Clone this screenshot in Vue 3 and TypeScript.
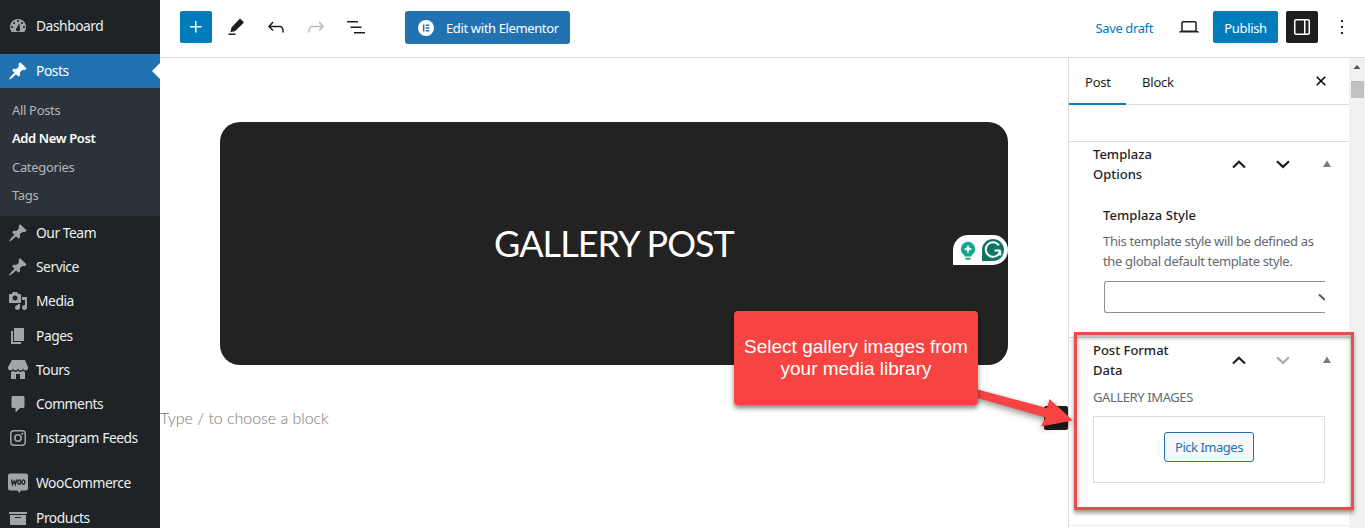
<script setup lang="ts">
interface MenuItem {
  label: string
  icon: string
  cls?: string
}

const pin = 'M10.44 3.02l1.82-1.82 6.36 6.35-1.83 1.82c-1.05-.68-2.48-.57-3.41.36l-.75.75c-.92.93-1.04 2.35-.35 3.41l-1.83 1.82-2.41-2.41-2.8 2.79c-.42.42-3.38 2.71-3.8 2.29s1.86-3.39 2.28-3.81l2.79-2.79L4.1 9.36l1.83-1.82c1.05.69 2.48.57 3.4-.36l.75-.75c.93-.92 1.05-2.35.36-3.41z'
const dashboard = 'M3.76 16h12.48c1.1-1.37 1.76-3.11 1.76-5 0-4.42-3.58-8-8-8s-8 3.58-8 8c0 1.89.66 3.63 1.76 5zM10 4c.55 0 1 .45 1 1s-.45 1-1 1-1-.45-1-1 .45-1 1-1zM6 6c.55 0 1 .45 1 1s-.45 1-1 1-1-.45-1-1 .45-1 1-1zm8 0c.55 0 1 .45 1 1s-.45 1-1 1-1-.45-1-1 .45-1 1-1zM11.300 7l.7 6.200a2 2 0 1 1-2.900-1.600zM4 10c.55 0 1 .45 1 1s-.45 1-1 1-1-.45-1-1 .45-1 1-1zm12 0c.55 0 1 .45 1 1s-.45 1-1 1-1-.45-1-1 .45-1 1-1z'
const media = 'M13 11V4c0-.55-.45-1-1-1h-1.67L9 1H5L3.67 3H2c-.55 0-1 .45-1 1v7c0 .55.45 1 1 1h10c.55 0 1-.45 1-1zM7 4.5c1.38 0 2.5 1.12 2.5 2.5S8.38 9.5 7 9.5 4.5 8.38 4.5 7 5.62 4.5 7 4.5zM14 6h5v10.5c0 1.38-1.12 2.5-2.5 2.5S14 17.88 14 16.5s1.12-2.5 2.5-2.5c.17 0 .34.02.5.05V9h-3V6zm-4 8.05V13h2v3.5c0 1.38-1.12 2.5-2.5 2.5S7 17.88 7 16.5 8.12 14 9.5 14c.17 0 .34.02.5.05z'
const pages = 'M6 15V2h10v13H6zm-1 1h8v2H3V5h2v11z'
const store = 'M1 10c.41.29.96.43 1.5.43.55 0 1.09-.14 1.5-.43.62-.46 1-1.17 1-2 0 .83.37 1.54 1 2 .41.29.96.43 1.5.43.55 0 1.09-.14 1.5-.43.62-.46 1-1.17 1-2 0 .83.37 1.54 1 2 .41.29.96.43 1.51.43.54 0 1.08-.14 1.49-.43.62-.46 1-1.17 1-2 0 .83.37 1.54 1 2 .41.29.96.43 1.5.43.55 0 1.09-.14 1.5-.43.63-.46 1-1.17 1-2V7l-3-7H4L0 7v1c0 .83.37 1.54 1 2zm2 8.99h5v-5h4v5h5v-7c-.37-.05-.72-.22-1-.43-.63-.45-1-.73-1-1.56 0 .83-.38 1.11-1 1.56-.41.3-.95.43-1.49.44-.55 0-1.1-.14-1.51-.44-.63-.45-1-.73-1-1.56 0 .83-.38 1.11-1 1.56-.41.3-.95.43-1.5.44-.54 0-1.09-.14-1.5-.44-.63-.45-1-.73-1-1.57 0 .84-.38 1.12-1 1.57-.29.21-.63.38-1 .44v6.99z'
const comment = 'M5 2h10c1.1 0 1.5.6 1.500 1.500v9c0 .9-.5 1.500-1.500 1.500h-3l-4.500 4.500v-4.500H5c-1 0-1.500-.6-1.500-1.500v-9C3.500 2.600 4 2 5 2z'
const instagram = 'M6 2h8a4 4 0 0 1 4 4v8a4 4 0 0 1-4 4H6a4 4 0 0 1-4-4V6a4 4 0 0 1 4-4zm0 1.500A2.500 2.500 0 0 0 3.500 6v8A2.500 2.500 0 0 0 6 16.500h8a2.500 2.500 0 0 0 2.500-2.500V6A2.500 2.500 0 0 0 14 3.500zM10 6a4 4 0 1 1 0 8 4 4 0 0 1 0-8zm0 1.600a2.400 2.400 0 1 0 0 4.800 2.400 2.400 0 0 0 0-4.800zM14.300 4.700a1 1 0 1 1 0 2 1 1 0 0 1 0-2z'
const woo = 'M2 .5h16a2 2 0 0 1 2 2v13a2 2 0 0 1-2 2h-5.500l-.7 2.500-2.600-2.500H2a2 2 0 0 1-2-2v-13a2 2 0 0 1 2-2z'
const archive = 'M19 4v2H1V4h18zM2 7h16v10H2V7zm11 3V9H7v1h6z'

const subItems: string[] = ['All Posts', 'Add New Post', 'Categories', 'Tags']

const items: MenuItem[] = [
  { label: 'Our Team', icon: pin },
  { label: 'Service', icon: pin },
  { label: 'Media', icon: media },
  { label: 'Pages', icon: pages },
  { label: 'Tours', icon: store },
  { label: 'Comments', icon: comment },
  { label: 'Instagram Feeds', icon: instagram },
  { label: 'WooCommerce', icon: woo, cls: 'woo' },
  { label: 'Products', icon: archive },
]
</script>

<template>
  <div class="screen">
    <nav class="menu">
      <div class="item first">
        <svg class="dash" viewBox="0 0 20 20"><path :d="dashboard" fill-rule="evenodd" /></svg>
        <span>Dashboard</span>
      </div>
      <div class="item current">
        <svg class="dash" viewBox="0 0 20 20"><path :d="pin" /></svg>
        <span>Posts</span>
        <i class="notch"></i>
      </div>
      <div class="submenu">
        <div v-for="s in subItems" :key="s" class="sub" :class="{ on: s === 'Add New Post' }">{{ s }}</div>
      </div>
      <div v-for="m in items" :key="m.label" class="item" :class="m.cls">
        <svg class="dash" viewBox="0 0 20 20">
          <path :d="m.icon" fill-rule="evenodd" />
          <g v-if="m.cls === 'woo'" class="woo-mark">
            <path d="M3.500 6.500l1 5 1.600-3.600 1.300 3.600 1.300-5" />
            <ellipse cx="11.200" cy="9" rx="1.400" ry="2.200" />
            <ellipse cx="15.400" cy="9" rx="1.400" ry="2.200" />
          </g>
        </svg>
        <span>{{ m.label }}</span>
      </div>
    </nav>

    <div class="editor">
      <header class="bar">
        <div class="tools">
          <button class="sq blue"><svg viewBox="0 0 24 24"><path d="M11 12.500V17.500H12.500V12.500H17.500V11H12.500V6H11V11H6V12.500H11Z" /></svg></button>
          <button class="sq"><svg viewBox="0 0 24 24"><path d="M16.800 4.200l2.400 2.300c.6.600.6 1.200 0 1.800L11.200 16l-4.800 1.300 1.100-4.900 7.700-8.200c.6-.6 1.100-.6 1.600 0zM4.500 18.500h7V20h-7z" /></svg></button>
          <button class="sq"><svg viewBox="0 0 24 24"><path d="M18.300 11.700c-.6-.6-1.400-.9-2.300-.9H6.700l2.900-3.300-1.100-1-4.500 5L8.500 16l1-1-2.700-2.700H16c.5 0 .9.2 1.300.5 1 1 1 3.400 1 4.500v.3h1.500v-.2c0-1.500 0-4.300-1.500-5.700z" /></svg></button>
          <button class="sq off"><svg viewBox="0 0 24 24"><path d="M15.600 6.500l-1.100 1 2.900 3.300H8c-.9 0-1.700.3-2.300.9-1.400 1.500-1.400 4.200-1.400 5.600v.2h1.500v-.3c0-1.100 0-3.500 1-4.500.3-.3.700-.5 1.300-.5h9.200L14.500 15l1.100 1.100 4.600-4.600-4.600-5z" /></svg></button>
          <button class="sq"><svg viewBox="0 0 24 24"><path d="M3 6h11v1.500H3V6Zm3.500 5.500h11V13h-11v-1.500ZM21 17H10v1.500h11V17Z" /></svg></button>
        </div>
        <button class="elementor">
          <svg viewBox="0 0 16 16"><circle cx="8" cy="8" r="8" fill="#fff" /><path d="M4.900 4.500h1.500v7H4.900zM7.700 4.500h3.700v1.400H7.700zM7.700 7.300h3.700v1.400H7.700zM7.700 10.100h3.700v1.400H7.700z" fill="#2271b1" /></svg>
          <span>Edit with Elementor</span>
        </button>
        <div class="actions">
          <span class="draft">Save draft</span>
          <button class="sq device"><svg viewBox="0 0 24 24"><path d="M20.500 16h-.7V8c0-1.100-.9-2-2-2H6.200c-1.100 0-2 .9-2 2v8h-.7c-.8 0-1.500.7-1.500 1.500h20c0-.8-.7-1.500-1.500-1.500zM5.700 8c0-.3.2-.5.5-.5h11.600c.3 0 .5.2.5.5v7.600H5.700V8z" /></svg></button>
          <button class="publish">Publish</button>
          <button class="sq dark"><svg viewBox="0 0 24 24"><path d="M18 4H6c-1.100 0-2 .9-2 2v12c0 1.100.9 2 2 2h12c1.100 0 2-.9 2-2V6c0-1.100-.9-2-2-2zm-4 14.500H6c-.3 0-.5-.2-.5-.5V6c0-.3.2-.5.5-.5h8v13zm4.500-.5c0 .3-.2.5-.5.5h-2.500v-13H18c.3 0 .5.2.5.5v12z" /></svg></button>
          <button class="sq"><svg viewBox="0 0 24 24"><path d="M13 19h-2v-2h2v2zm0-6h-2v-2h2v2zm0-6h-2V5h2v2z" /></svg></button>
        </div>
      </header>

      <div class="body">
        <main class="canvas">
          <section class="cover">
            <h1>GALLERY POST</h1>
            <div class="grammar">
              <svg viewBox="0 0 55 30">
                <path d="M15 0h25a15 15 0 0 1 0 30H0V15A15 15 0 0 1 15 0z" fill="#fff" />
                <circle cx="15" cy="14" r="7.200" fill="#12a58c" />
                <path d="M11.500 19h7v2.500h-7zM12.500 22.700h5v2h-5z" fill="#12a58c" />
                <path d="M15 9.500l1.300 3.200 3.200 1.300-3.200 1.300L15 18.500l-1.300-3.200-3.200-1.300 3.200-1.300z" fill="#fff" />
                <path d="M40 4a11 11 0 1 1 0 22H29V15A11 11 0 0 1 40 4z" fill="#0d7562" />
                <path d="M45.800 10.300A7.200 7.200 0 1 0 47 16.200M47.300 15.500h-5.800M47.200 15.500v5" fill="none" stroke="#fff" stroke-width="2" />
              </svg>
            </div>
          </section>
          <div class="prompt"><span>Type / to choose a block</span><i class="inserter"></i></div>
        </main>

        <aside class="panel">
          <div class="tabs">
            <span class="tab active">Post</span>
            <span class="tab">Block</span>
            <svg class="close" viewBox="0 0 24 24"><path d="M12 13.060l3.712 3.713 1.061-1.060L13.061 12l3.712-3.712-1.060-1.060L12 10.938 8.288 7.227l-1.061 1.060L10.939 12l-3.712 3.712 1.060 1.061L12 13.061z" /></svg>
          </div>
          <section class="box">
            <div class="head">
              <h2>Templaza<br />Options</h2>
              <svg class="handles" viewBox="0 0 101 14"><path d="M2 10.500L8 4.800l6 5.700" class="ch" /><path d="M46 4.200l6 5.700 6-5.700" class="ch" /><path d="M92 10l4-6.500 4 6.500z" fill="#787c82" /></svg>
            </div>
            <div class="option">
              <h3>Templaza Style</h3>
              <p>This template style will be defined as<br />the global default template style.</p>
              <div class="select"><svg viewBox="0 0 8 10"><path d="M2 2.500l6 5.500" /></svg></div>
            </div>
          </section>
          <section class="box gallery">
            <div class="head">
              <h2>Post Format<br />Data</h2>
              <svg class="handles" viewBox="0 0 101 14"><path d="M2 10.500L8 4.800l6 5.700" class="ch" /><path d="M46 4.200l6 5.700 6-5.700" class="ch dim" /><path d="M92 10l4-6.500 4 6.500z" fill="#787c82" /></svg>
            </div>
            <p class="caption">GALLERY IMAGES</p>
            <div class="drop"><button class="pick">Pick Images</button></div>
          </section>
        </aside>

        <div class="scroll">
          <svg viewBox="0 0 16 16"><path d="M4.500 11L8 7l3.500 4z" fill="#505050" /></svg>
          <div class="thumb"></div>
        </div>
      </div>
    </div>

    <div class="frame"></div>
    <svg class="arrow" viewBox="0 0 110 60"><path d="M0 9.500L73 29 75.500 20 99 41.500 67 47.500 71.500 38.500 0 18z" fill="#f64443" /></svg>
    <div class="callout">Select gallery images from<br />your media library</div>
  </div>
</template>

<style>
body { margin: 0; overflow: hidden; }
</style>

<style scoped>
* { box-sizing: border-box; }
.screen {
  position: relative;
  display: flex;
  width: 1365px;
  height: 528px;
  overflow: hidden;
  background: #fff;
  color: #1e1e1e;
  font: 13px/20px "Noto Sans", "Open Sans", sans-serif;
}
button { border: 0; padding: 0; margin: 0; background: none; color: inherit; font: inherit; }
h1, h2, h3, p { margin: 0; }

.menu { width: 160px; height: 528px; background: #1d2327; overflow: hidden; flex: none; }
.item {
  position: relative;
  display: flex;
  align-items: center;
  height: 34.200px;
  padding-left: 8px;
  gap: 8px;
  color: #f0f0f1;
  font-size: 13.800px;
  letter-spacing: -0.450px;
  white-space: nowrap;
}
.first { height: 54px; padding-bottom: 2px; }
.dash { width: 20px; height: 20px; fill: #a1a5a9; flex: none; }
.current { height: 34px; background: #2271b1; color: #fff; }
.current .dash { fill: #fff; }
.notch { position: absolute; right: 0; top: 9px; border: 8px solid transparent; border-right-color: #fff; border-left: 0; }
.submenu { height: 128px; padding-top: 8px; background: #2c3338; }
.sub { height: 28.300px; padding-left: 12px; line-height: 28px; color: #b2b6ba; letter-spacing: -0.320px; }
.sub.on { color: #fff; font-weight: 600; letter-spacing: -0.380px; }
.woo { margin-top: 11px; }
.woo-mark { fill: none; stroke: #1d2327; stroke-width: 1.300; }

.editor { display: flex; flex-direction: column; flex: 1; min-width: 0; }
.bar { display: flex; align-items: flex-start; height: 58px; padding: 11px 7px 0 20px; border-bottom: 1px solid #ddd; }
.tools { display: flex; gap: 8px; }
.sq { display: flex; align-items: center; justify-content: center; width: 32px; height: 32px; border-radius: 2px; }
.sq svg { width: 24px; height: 24px; fill: #1e1e1e; }
.blue { background: #007cba; }
.blue svg, .dark svg { fill: #fff; }
.dark { background: #1e1e1e; }
.off svg { fill: #bbb; }
.elementor { display: flex; align-items: center; gap: 12px; width: 165px; height: 33px; margin-left: 33px; padding-left: 13px; border-radius: 3px; background: #2271b1; color: #fff; letter-spacing: -0.370px; white-space: nowrap; }
.elementor svg { width: 16px; height: 16px; }
.elementor span { padding-top: 1px; }
.actions { display: flex; align-items: center; gap: 8px; margin-left: auto; height: 32px; }
.draft { color: #007cba; padding: 2px 12px 0 0; letter-spacing: -0.380px; }
.publish { width: 65px; height: 32px; border-radius: 2px; background: #007cba; color: #fff; padding-top: 2px; letter-spacing: -0.350px; }

.body { display: flex; flex: 1; }
.canvas { width: 908px; padding-top: 64px; flex: none; }
.cover { position: relative; display: flex; align-items: center; justify-content: center; width: 788px; height: 243px; margin-left: 60px; border-radius: 20px; background: #222; }
.cover h1 { color: #fff; font: 400 36px/48px Lato, sans-serif; letter-spacing: -0.950px; margin-bottom: 2px; }
.grammar { position: absolute; right: 0; top: 113px; width: 55px; height: 30px; }
.grammar svg { display: block; width: 55px; height: 30px; }
.prompt { display: flex; align-items: center; justify-content: space-between; height: 24px; margin-top: 41px; color: #777; font: 300 16px/24px Lato, sans-serif; letter-spacing: -0.040px; }
.inserter { width: 24px; height: 24px; border-radius: 2px; background: #1e1e1e; }

.panel { width: 281px; border-left: 1px solid #ddd; flex: none; }
.tabs { display: flex; align-items: center; height: 47px; border-bottom: 1px solid #ddd; }
.tab { height: 47px; padding: 14px 16px 0; letter-spacing: -0.200px; }
.active { width: 57px; border-bottom: 2px solid #007cba; }
.close { width: 24px; height: 24px; margin-left: auto; margin-right: 16px; }
.box { height: 196px; border-top: 1px solid #ddd; margin-top: 36px; padding: 0 24px; }
.head { display: flex; align-items: center; height: 44px; margin-right: -7px; justify-content: space-between; }
.head h2 { font-size: 13px; line-height: 20px; font-weight: 500; margin-top: -1px; }
.handles { width: 101px; height: 14px; margin-top: -1px; }
.ch { fill: none; stroke: #1e1e1e; stroke-width: 2.200; }
.dim { stroke: #aaa; }
.option { padding: 19px 0 0 10px; }
.option h3 { font-size: 13px; line-height: 20px; font-weight: 500; letter-spacing: 0.060px; }
.option p { margin-top: 6px; color: #646970; white-space: nowrap; letter-spacing: -0.350px; }
.select { display: flex; align-items: center; justify-content: flex-end; height: 32px; margin: 10px 0 0 1px; border: 1px solid #8c8f94; border-right: 0; border-radius: 3px 0 0 3px; }
.select svg { width: 8px; height: 10px; fill: none; stroke: #555; stroke-width: 2; }
.gallery { height: 189px; margin-top: 0; border-bottom: 1px solid #eee; }
.caption { color: #646970; margin-top: 5px; line-height: 20px; letter-spacing: -0.400px; }
.drop { display: flex; align-items: center; justify-content: center; height: 67px; margin-top: 9px; border: 1px solid #ddd; }
.pick { width: 90px; height: 30px; margin-bottom: 5px; border: 1px solid #2271b1; border-radius: 3px; background: #f6f7f7; color: #2271b1; letter-spacing: -0.480px; }

.scroll { width: 16px; background: #f1f1f1; }
.scroll svg { display: block; width: 16px; height: 16px; }
.thumb { width: 13px; height: 17px; margin: 7px 0 0 2px; background: #c1c1c1; }

.frame { position: absolute; left: 1074px; top: 332px; width: 280px; height: 178px; border: 3px solid #e94e4b; box-shadow: 0 3px 4px rgba(0,0,0,.4), inset 0 3px 4px rgba(0,0,0,.3); }
.arrow { position: absolute; left: 974px; top: 379px; width: 110px; height: 60px; filter: drop-shadow(0 3px 3px rgba(0,0,0,.4)); }
.callout { position: absolute; left: 734px; top: 311px; width: 244px; height: 94px; padding-top: 25px; border-radius: 4px; background: #f64443; color: #fff; text-align: center; font: 19px/22px "Liberation Sans", sans-serif; box-shadow: 0 3px 5px rgba(0,0,0,.5); white-space: nowrap; }
</style>
